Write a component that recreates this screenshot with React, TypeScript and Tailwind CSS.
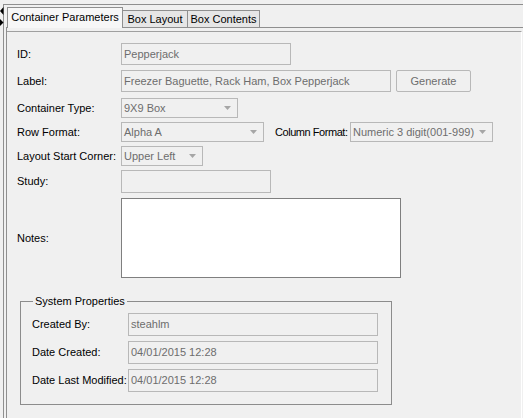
import { ReactNode } from "react"

const font = "font-['Liberation_Sans',Arial,sans-serif]"

function DownArrow() {
   return (
      <svg width="7" height="4" viewBox="0 0 7 4" className="shrink-0">
         <polygon points="0,0 7,0 3.5,4" fill="#a6a6a6" />
      </svg>
   )
}

function TextBox({ value, className }: { value?: string; className: string }) {
   return (
      <div
         className={`flex items-center whitespace-nowrap border border-[#b8b8b8] bg-[#f0f0f0] pl-[2px] text-[#6d6d6d] ${className}`}
      >
         {value}
      </div>
   )
}

function Combo({ value, className }: { value: string; className: string }) {
   return (
      <div
         className={`flex h-[20px] items-center justify-between whitespace-nowrap border border-[#b8b8b8] bg-[#f0f0f0] pl-[2px] pr-[6px] text-[#6d6d6d] ${className}`}
      >
         <span>{value}</span>
         <DownArrow />
      </div>
   )
}

function Row({ label, children, className }: { label: string; children: ReactNode; className: string }) {
   return (
      <div className={`flex items-center ${className}`}>
         <div className="w-[104px] shrink-0 whitespace-nowrap">{label}</div>
         {children}
      </div>
   )
}

function PropRow({ label, value }: { label: string; value: string }) {
   return (
      <div className="flex items-center">
         <div className="w-[96px] shrink-0 whitespace-nowrap">{label}</div>
         <TextBox value={value} className="h-[23px] w-[250px]" />
      </div>
   )
}

export default function App() {
   return (
      <div
         className={`relative h-[418px] w-[523px] overflow-hidden bg-[#f0f0f0] pl-[3px] pt-[4px] text-[11px] leading-[13px] text-black ${font}`}
      >
         {/* split pane one-touch arrows */}
         <svg width="4" height="28" viewBox="0 0 4 28" className="absolute left-0 top-0">
            <polygon points="3.5,7 0,11 3.5,15" fill="#000" />
            <polygon points="0,19 3.5,22.5 0,26" fill="#000" />
         </svg>

         <div className="flex h-full flex-col border-l border-t border-[#8f8f8f] pl-[2px] pt-[1px]">
            <div className="relative z-10 -mb-px flex h-[22px] items-end pl-[1px]">
               <div className="flex h-[21px] w-[116px] items-center justify-center border border-b-0 border-[#8f8f8f] bg-[#f7f7f7] pb-[1px]">
                  Container Parameters
               </div>
               <div className="mb-px flex h-[17px] w-[65px] items-center justify-center border border-b-0 border-l-0 border-[#8f8f8f] bg-[#e6e6e6]">
                  Box Layout
               </div>
               <div className="mb-px flex h-[17px] w-[72px] items-center justify-center border border-b-0 border-l-0 border-[#8f8f8f] bg-[#e6e6e6]">
                  Box Contents
               </div>
            </div>

            <div className="flex flex-1 flex-col border-l border-t border-[#8f8f8f] pt-[3px]">
               <div className="mr-px flex flex-1 flex-col border-r border-t border-r-white border-t-[#a0a0a0]">
                  <div className="flex flex-col pl-[10px]">
                     <Row label="ID:" className="mt-[11px]">
                        <TextBox value="Pepperjack" className="h-[22px] w-[170px]" />
                     </Row>
                     <Row label="Label:" className="mt-[5px]">
                        <TextBox value="Freezer Baguette, Rack Ham, Box Pepperjack" className="h-[22px] w-[270px]" />
                        <div className="ml-[5px] flex h-[22px] w-[75px] items-center justify-center rounded-[2px] border border-[#b8b8b8] bg-[#f0f0f0] text-[#6d6d6d]">
                           Generate
                        </div>
                     </Row>
                     <Row label="Container Type:" className="mt-[6px]">
                        <Combo value="9X9 Box" className="w-[117px]" />
                     </Row>
                     <Row label="Row Format:" className="mt-[4px]">
                        <Combo value="Alpha A" className="w-[143px]" />
                        <div className="ml-[11px] w-[75px] shrink-0 whitespace-nowrap tracking-[-0.45px]">
                           Column Format:
                        </div>
                        <Combo value="Numeric 3 digit(001-999)" className="w-[143px]" />
                     </Row>
                     <Row label="Layout Start Corner:" className="mt-[4px]">
                        <Combo value="Upper Left" className="w-[82px]" />
                     </Row>
                     <Row label="Study:" className="mt-[4px]">
                        <TextBox className="h-[23px] w-[150px]" />
                     </Row>
                     <Row label="Notes:" className="mt-[5px]">
                        <div className="h-[80px] w-[280px] border border-[#7f7f7f] bg-white" />
                     </Row>
                  </div>

                  <fieldset className="ml-[13px] mt-[17px] w-[372px] border border-[#8c8c8c] pb-[12px] pl-[11px] pt-[5px]">
                     <legend className="ml-px px-[2px] leading-[13px]">System Properties</legend>
                     <div className="flex flex-col gap-[5px]">
                        <PropRow label="Created By:" value="steahlm" />
                        <PropRow label="Date Created:" value="04/01/2015 12:28" />
                        <PropRow label="Date Last Modified:" value="04/01/2015 12:28" />
                     </div>
                  </fieldset>
               </div>
            </div>
         </div>
      </div>
   )
}
